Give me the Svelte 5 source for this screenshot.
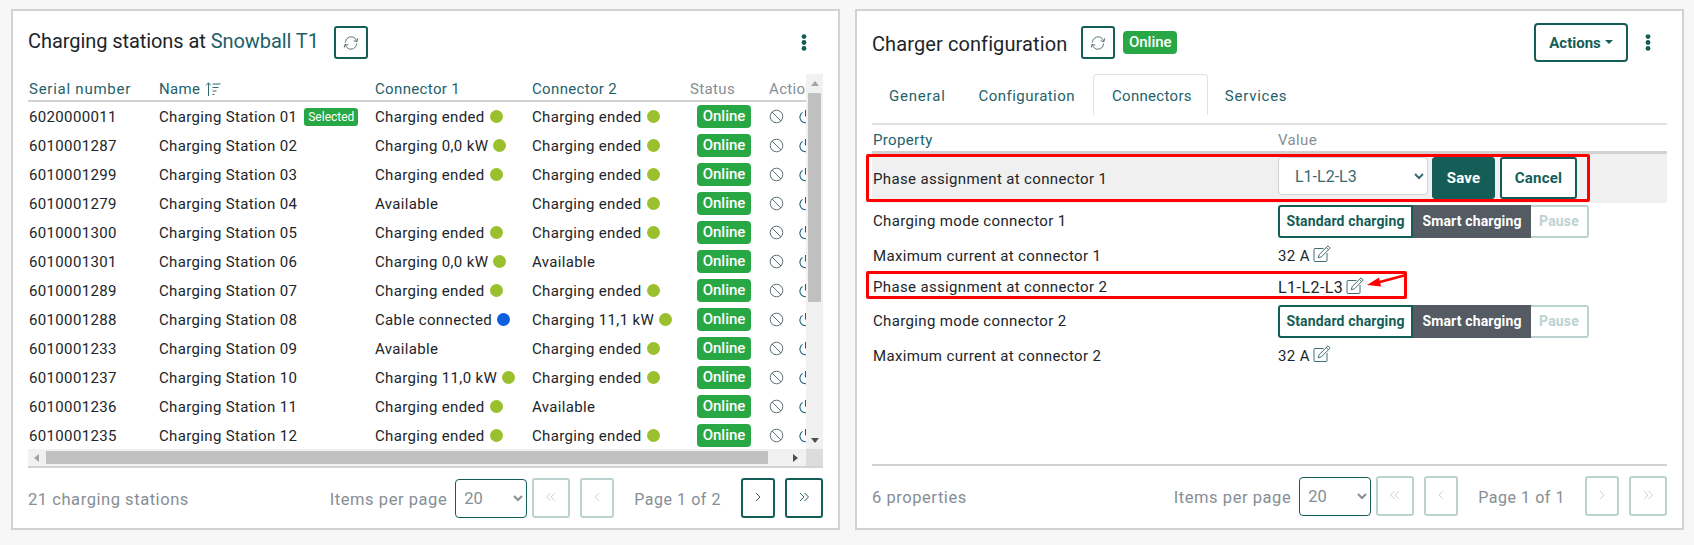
<script>
  const rows = [
    ['6020000011','Charging Station 01',['Charging ended','g'],['Charging ended','g'],true],
    ['6010001287','Charging Station 02',['Charging 0,0 kW','g'],['Charging ended','g']],
    ['6010001299','Charging Station 03',['Charging ended','g'],['Charging ended','g']],
    ['6010001279','Charging Station 04',['Available',''],['Charging ended','g']],
    ['6010001300','Charging Station 05',['Charging ended','g'],['Charging ended','g']],
    ['6010001301','Charging Station 06',['Charging 0,0 kW','g'],['Available','']],
    ['6010001289','Charging Station 07',['Charging ended','g'],['Charging ended','g']],
    ['6010001288','Charging Station 08',['Cable connected','b'],['Charging 11,1 kW','g']],
    ['6010001233','Charging Station 09',['Available',''],['Charging ended','g']],
    ['6010001237','Charging Station 10',['Charging 11,0 kW','g'],['Charging ended','g']],
    ['6010001236','Charging Station 11',['Charging ended','g'],['Available','']],
    ['6010001235','Charging Station 12',['Charging ended','g'],['Charging ended','g']]
  ];
</script>

{#snippet refresh()}
  <svg class="ico16" viewBox="0 0 16 16" fill="none" stroke="#4d6a6c" stroke-width="0.9" stroke-linecap="round" stroke-linejoin="round">
    <path d="M2.3 7.2A5.8 5.8 0 0 1 12.6 3.9l1.2 2.6" />
    <path d="M11 5.9l2.9.8.8-3" />
    <path d="M13.7 8.8A5.8 5.8 0 0 1 3.4 12.1L2.2 9.5" />
    <path d="M5 10.1l-2.9-.8-.8 3" />
  </svg>
{/snippet}

{#snippet kebab()}
  <svg class="kebab" viewBox="0 0 6 17" fill="#155e57"><circle cx="3" cy="2.6" r="2.4"/><circle cx="3" cy="8.5" r="2.4"/><circle cx="3" cy="14.4" r="2.4"/></svg>
{/snippet}

{#snippet pencil()}
  <svg class="pencil" viewBox="0 0 18 18" fill="none" stroke="#2f5f66" stroke-width="0.9" stroke-linejoin="round">
    <path d="M10.5 3.5H2a1 1 0 0 0-1 1V15.5a1 1 0 0 0 1 1h11a1 1 0 0 0 1-1V8" />
    <path d="M15 .8l2.2 2.2-8.8 8.8-3.2 1 1-3.2z" />
    <path d="M13.3 2.5l2.2 2.2" />
  </svg>
{/snippet}

{#snippet chev(d, on)}
  <svg class="chev" viewBox="0 0 12 12" fill="none" stroke={on ? '#2f5f66' : '#c5d6d5'} stroke-width="1">
    {#if d === 'll'}<path d="M5.5 2 1.5 6l4 4M10 2 6 6l4 4" />
    {:else if d === 'l'}<path d="M8 2 4 6l4 4" />
    {:else if d === 'r'}<path d="M4 2l4 4-4 4" />
    {:else}<path d="M2 2l4 4-4 4M6.5 2l4 4-4 4" />{/if}
  </svg>
{/snippet}

{#snippet conn(c)}
  <span class="conn">{c[0]}{#if c[1]}<i class="dot {c[1]}"></i>{/if}</span>
{/snippet}

{#snippet modes()}
  <div class="seg">
    <span class="s1">Standard charging</span><span class="s2">Smart charging</span><span class="s3">Pause</span>
  </div>
{/snippet}

<div class="page">
  <section class="card">
    <header class="head left-head">
      <h2 class="stitle">Charging stations at <span class="teal">Snowball T1</span></h2>
      <button class="icon-btn">{@render refresh()}</button>
      <span class="grow"></span>
      {@render kebab()}
    </header>

    <div class="scroller">
      <div class="viewport">
        <table class="stations">
          <colgroup><col class="c1"/><col class="c2"/><col class="c3"/><col class="c4"/><col class="c5"/><col class="c6"/></colgroup>
          <thead>
            <tr>
              <th class="serial">Serial number</th>
              <th>Name
                <svg class="sort" viewBox="0 0 16 16" fill="none" stroke="#2f6a70" stroke-width="1"><path d="M3.5 15V2M1.2 4.4 3.5 1.8l2.3 2.6M7.5 3h8M7.5 6.5h6M7.5 10h4M7.5 13.5h2"/></svg>
              </th>
              <th>Connector 1</th>
              <th>Connector 2</th>
              <th class="muted">Status</th>
              <th class="muted">Actions</th>
            </tr>
          </thead>
          <tbody>
            {#each rows as r}
              <tr>
                <td>{r[0]}</td>
                <td>{r[1]}{#if r[4]}<span class="selected">Selected</span>{/if}</td>
                <td>{@render conn(r[2])}</td>
                <td>{@render conn(r[3])}</td>
                <td><span class="online">Online</span></td>
                <td class="acts">
                  <svg class="act" viewBox="0 0 15 15" fill="none" stroke="#5c7073" stroke-width="1"><circle cx="7.5" cy="7.5" r="6.3"/><path d="M3 3l9 9"/></svg>
                  <svg class="act pow" viewBox="0 0 15 15" fill="none" stroke="#1f5f7a" stroke-width="1.1"><path d="M4.6 3.4a5.6 5.6 0 1 0 5.8 0M7.5 1v6.5"/></svg>
                </td>
              </tr>
            {/each}
          </tbody>
        </table>
      </div>
      <div class="vbar">
        <i class="tri up"></i><span class="vthumb"></span><span class="grow"></span><i class="tri down"></i>
      </div>
      <div class="hbar">
        <i class="tri lft"></i><span class="hthumb"></span><span class="grow"></span><i class="tri rgt"></i>
      </div>
      <div class="corner"></div>
    </div>

    <footer class="foot left-foot">
      <span class="count">21 charging stations</span>
      <span class="grow"></span>
      <span class="lbl">Items per page</span>
      <select class="pp"><option>20</option></select>
      <button class="pg off b38">{@render chev('ll', false)}</button>
      <button class="pg off b34">{@render chev('l', false)}</button>
      <span class="pageno">Page 1 of 2</span>
      <button class="pg b34">{@render chev('r', true)}</button>
      <button class="pg b38">{@render chev('rr', true)}</button>
    </footer>
  </section>

  <section class="card right">
    <header class="head right-head">
      <h2 class="cfg">Charger configuration</h2>
      <button class="icon-btn">{@render refresh()}</button>
      <span class="online big">Online</span>
      <span class="grow"></span>
      <button class="actions">Actions<i class="caret"></i></button>
      {@render kebab()}
    </header>

    <nav class="tabs">
      <span class="tab first">General</span>
      <span class="tab second">Configuration</span>
      <span class="tab active">Connectors</span>
      <span class="tab last">Services</span>
    </nav>

    <div class="props">
      <div class="prow phead"><span class="teal2">Property</span><span class="gr">Value</span></div>
      <div class="prow editing">
        <span>Phase assignment at connector 1</span>
        <div class="val">
          <select class="phase"><option>L1-L2-L3</option></select>
          <button class="save">Save</button>
          <button class="cancel">Cancel</button>
        </div>
      </div>
      <div class="prow seg-row"><span class="lift">Charging mode connector 1</span><div class="val">{@render modes()}</div></div>
      <div class="prow text-row"><span>Maximum current at connector 1</span><div class="val">32 A {@render pencil()}</div></div>
      <div class="prow text-row"><span class="lift">Phase assignment at connector 2</span><div class="val lift"><span class="ph">L1-L2-L3</span> {@render pencil()}</div></div>
      <div class="prow seg-row"><span class="lift">Charging mode connector 2</span><div class="val">{@render modes()}</div></div>
      <div class="prow text-row"><span>Maximum current at connector 2</span><div class="val">32 A {@render pencil()}</div></div>
    </div>

    <footer class="foot right-foot">
      <span class="count">6 properties</span>
      <span class="grow"></span>
      <span class="lbl">Items per page</span>
      <select class="pp"><option>20</option></select>
      <button class="pg off b38">{@render chev('ll', false)}</button>
      <button class="pg off b34">{@render chev('l', false)}</button>
      <span class="pageno">Page 1 of 1</span>
      <button class="pg off b34">{@render chev('r', false)}</button>
      <button class="pg off b38">{@render chev('rr', false)}</button>
    </footer>

    <div class="mark m1"></div>
    <div class="mark m2"></div>
    <svg class="arrow" viewBox="0 0 44 16"><path d="M41 2 13 9.5" stroke="#f00" stroke-width="2.4" fill="none"/><path d="M2 12 14 4.5l2 9z" fill="#f00"/></svg>
  </section>
</div>

<style>
  :global(body) { margin: 0; background: #f7f7f7; }
  .page {
    display: flex; gap: 15px; padding: 9px 10px 15px 11px; height: 521px;
    font-family: Roboto, "Liberation Sans", sans-serif; font-size: 15px; color: #212529;
  }
  .card {
    position: relative; box-sizing: border-box; width: 829px; height: 521px;
    background: #fff; border: 2px solid #d2d2d2; padding: 0 15px;
    display: flex; flex-direction: column;
  }
  .grow { flex: 1; }
  .head { display: flex; align-items: center; }
  .left-head { height: 33px; margin: 15px 0 15px; }
  .right-head { height: 39px; margin: 12px 0 12px; }
  h2 { margin: -3px 0 0; font-weight: 400; font-size: 20px; color: #212529; }
  .stitle { letter-spacing: -.07px; }
  .stitle + .icon-btn { margin-left: 15px; }
  .teal { color: #1c6068; }
  .cfg { margin-top: 3px; letter-spacing: .1px; }
  .icon-btn {
    box-sizing: border-box; width: 34px; height: 33px; margin-left: 14px; padding: 0;
    background: #fff; border: 2px solid #155e57; border-radius: 3px;
    display: flex; align-items: center; justify-content: center;
  }
  .ico16 { width: 16px; height: 16px; }
  .kebab { width: 6px; height: 17px; margin-right: 16px; flex: none; }

  .scroller {
    display: grid; grid-template-columns: 778px 17px; grid-template-rows: 375px 17px;
    border-bottom: 2px solid #d2d2d2; flex: none;
  }
  .viewport { overflow: hidden; }
  .stations { border-collapse: collapse; table-layout: fixed; width: 860px; }
  .c1 { width: 130px; } .c2 { width: 216px; } .c3 { width: 157px; } .c4 { width: 158px; } .c5 { width: 79px; } .c6 { width: 120px; }
  th {
    font-weight: 400; text-align: left; color: #24626b; height: 23px; padding: 3px 0 0 1px;
    border-bottom: 2px solid #d2d2d2; white-space: nowrap; letter-spacing: .35px;
  }
  th.serial { letter-spacing: .75px; }
  th.muted { color: #868e96; }
  .sort { width: 16px; height: 16px; vertical-align: -3px; margin-left: 1px; }
  td { height: 29px; padding: 0 0 0 1px; white-space: nowrap; letter-spacing: .35px; }
  .conn { display: inline-flex; align-items: center; }
  .dot { width: 13px; height: 13px; border-radius: 50%; margin-left: 5px; flex: none; }
  .dot.g { background: #9bc02e; }
  .dot.b { background: #0d5fe0; }
  .selected {
    display: inline-block; margin-left: 7px; padding: 0 4px; height: 18px; line-height: 18px;
    background: #28a745; color: #fff; border-radius: 3px; font-size: 12px; letter-spacing: 0; vertical-align: 1px;
  }
  .online {
    display: inline-block; box-sizing: border-box; width: 54px; height: 23px; line-height: 23px; margin-left: 7px;
    text-align: center; background: #28a745; color: #fff; border-radius: 4px; font-size: 15px; font-weight: 500; letter-spacing: 0;
  }
  .online.big { margin-left: 8px; }
  .acts { display: flex; align-items: center; height: 29px; gap: 14px; }
  .act { width: 15px; height: 15px; flex: none; }

  .vbar { background: #f1f1f1; display: flex; flex-direction: column; align-items: center; padding: 0 2px; box-sizing: border-box; }
  .vthumb { width: 13px; height: 209px; background: #c1c1c1; display: block; margin-top: 7px; }
  .hbar { background: #f1f1f1; display: flex; align-items: center; }
  .hthumb { height: 13px; width: 722px; background: #c1c1c1; margin-left: 7px; display: block; }
  .corner { background: #dcdcdc; }
  .tri { width: 0; height: 0; display: block; flex: none; border: 0 solid transparent; }
  .up { border-width: 0 4px 5px; border-bottom-color: #a3a3a3; margin-top: 7px; }
  .down { border-width: 5px 4px 0; border-top-color: #505050; margin-bottom: 6px; }
  .lft { border-width: 4px 5px 4px 0; border-right-color: #a3a3a3; margin-left: 6px; margin-right: 0; }
  .rgt { border-width: 4px 0 4px 5px; border-left-color: #505050; margin-right: 8px; }

  .foot { display: flex; align-items: center; color: #868e96; }
  .left-foot { margin-top: 10px; height: 40px; }
  .right-foot { margin: 10px 0 12px; height: 40px; }
  .count, .lbl { font-size: 16.5px; letter-spacing: .55px; margin-top: 3px; }
  .lbl { margin-right: 8px; }
  .pp {
    box-sizing: border-box; width: 72px; height: 39px; background: #fff; border: 1px solid #155e57; border-radius: 4px;
    font: inherit; font-size: 16.5px; color: #868e96; padding-left: 4px;
  }
  .pg {
    box-sizing: border-box; height: 40px; padding: 0; margin-left: 5px; background: #fff; border: 2px solid #155e57; border-radius: 3px;
    display: flex; align-items: center; justify-content: center;
  }
  .pg.off { border-color: #bcd2d1; }
  .b38 { width: 38px; } .b34 { width: 34px; margin-left: 10px; }
  .b38 + .b34 { margin-left: 10px; }
  .b34 + .b38 { margin-left: 10px; }
  .chev { width: 12px; height: 12px; margin-top: -3px; }
  .pageno { font-size: 16px; letter-spacing: .55px; margin: 3px 10px 0 20px; }

  .actions {
    box-sizing: border-box; width: 94px; height: 39px; padding: 0; background: #fff; border: 2px solid #155e57; border-radius: 4px;
    color: #155e57; font: inherit; font-weight: 700; letter-spacing: 0; margin-right: 17px;
    display: flex; align-items: center; justify-content: center;
  }
  .caret { width: 0; height: 0; border: 4px solid transparent; border-top-color: #155e57; border-bottom: 0; margin-left: 4px; margin-top: -2px; }

  .tabs { display: flex; height: 51px; box-sizing: border-box; border-bottom: 2px solid #e0e0e0; align-items: flex-start; }
  .tab { box-sizing: border-box; height: 41px; line-height: 42px; padding: 0 17px; color: #24626b; letter-spacing: .45px; border: 1px solid transparent; border-bottom: 0; }
  .tab.first { margin-left: -1px; letter-spacing: .8px; padding-right: 14px; }
  .tab.second { padding-right: 16px; }
  .tab.active { border-color: #dee2e6; border-radius: 4px 4px 0 0; margin-left: 1px; padding: 0 15px 0 18px; letter-spacing: .3px; }
  .tab.last { margin-left: -1px; letter-spacing: .75px; }

  .props { flex: 1; border-bottom: 2px solid #d2d2d2; letter-spacing: .35px; }
  .prow { display: grid; grid-template-columns: 405px 1fr; align-items: center; padding-left: 1px; }
  .val { display: flex; align-items: center; gap: 3px; }
  .lift { margin-top: -2px; }
  .phead { height: 23px; padding-top: 3px; border-bottom: 3px solid #d2d2d2; box-sizing: content-box; }
  .teal2 { color: #24626b; } .gr { color: #868e96; }
  .editing { height: 49px; background: #f0f0f0; }
  .phase {
    box-sizing: border-box; width: 150px; height: 38px; margin-top: -5px; background: #fff; border: 1px solid #ced4da; border-radius: 4px;
    font: inherit; font-size: 16px; color: #3a6a70; padding-left: 12px;
  }
  .save, .cancel { box-sizing: border-box; height: 42px; margin-top: -1px; padding: 0; border-radius: 3px; font: inherit; font-weight: 700; letter-spacing: .2px; }
  .save { width: 63px; margin-left: 1px; background: #155e57; color: #fff; border: 1px solid #155e57; }
  .cancel { width: 77px; margin-left: 2px; background: #fff; color: #155e57; border: 2px solid #155e57; }
  .seg-row { height: 33px; margin-top: 2px; }
  .seg-row + .text-row { height: 35px; }
  .text-row + .text-row { height: 30px; }
  .ph { font-size: 16px; letter-spacing: .45px; }
  .seg { display: inline-flex; height: 33px; box-sizing: border-box; font-size: 14px; font-weight: 700; letter-spacing: .15px; line-height: 29px; }
  .seg span { box-sizing: border-box; text-align: center; height: 33px; border: 2px solid #155e57; }
  .seg .s1 { width: 135px; color: #155e57; border-radius: 3px 0 0 3px; background: #fff; }
  .seg .s2 { width: 118px; background: #545b62; border-color: #545b62; color: #fff; }
  .seg .s3 { width: 58px; border-color: #bcd2d1; border-left: 0; color: #bcd2d1; border-radius: 0 3px 3px 0; background: #fff; }
  .pencil { width: 18px; height: 18px; margin-top: -3px; }

  .mark { position: absolute; box-sizing: border-box; border: 3px solid #f00; pointer-events: none; }
  .m1 { left: 9px; top: 143px; width: 724px; height: 48px; border-radius: 2px; }
  .m2 { left: 9px; top: 260px; width: 541px; height: 28px; border-radius: 2px; }
  .arrow { position: absolute; left: 508px; top: 262px; width: 44px; height: 16px; }
</style>
